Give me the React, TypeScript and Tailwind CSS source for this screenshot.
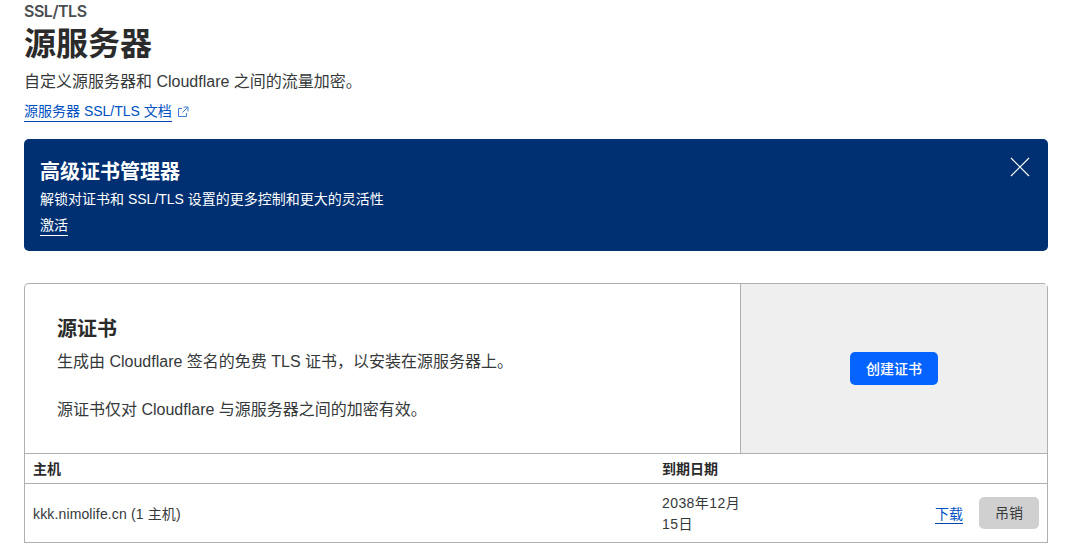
const font = "font-['Liberation_Sans','Noto_Sans_CJK_SC',sans-serif]";

export default function App() {
  return (
    <div className={`${font} h-[544px] overflow-hidden bg-white pl-6 pr-[29px] text-[#36393a]`}>
      <div className="pt-[1px] font-['Inter'] text-base font-semibold leading-[21px] tracking-[-0.03em] text-[#4a4d4f]">SSL/TLS</div>
      <h1 className="mt-[1px] text-[32px] font-semibold leading-[42px] text-[#2b2b2b]">源服务器</h1>
      <p className="mt-[5px] text-base leading-6">自定义源服务器和 Cloudflare 之间的流量加密。</p>
      <div className="mt-[8px] flex items-center gap-[5px] text-sm leading-5">
        <a className="border-b border-[#0045b0] leading-[19px] text-[#0051c3]">源服务器 SSL/TLS 文档</a>
        <svg viewBox="0 0 12 12" fill="none" stroke="#3b7dd8" strokeWidth="1" className="h-3 w-3">
          <path d="M5 2.5H1.5v8h8V7" />
          <path d="M6.5 1h4.5v4.5M11 1 5.5 6.5" />
        </svg>
      </div>

      <div className="mt-[17px] flex h-28 justify-between rounded-[5px] bg-[#003072] pl-4 pr-[18px] pt-[19px] text-white">
        <div>
          <h2 className="text-xl font-semibold leading-7">高级证书管理器</h2>
          <p className="mt-[3px] text-sm leading-5">解锁对证书和 SSL/TLS 设置的更多控制和更大的灵活性</p>
          <a className="mt-[7px] inline-block border-b border-white text-sm leading-[19px]">激活</a>
        </div>
        <svg viewBox="0 0 20 20" fill="none" stroke="white" strokeWidth="1.2" className="-mt-[1px] h-5 w-5">
          <path d="M1 1 19 19M19 1 1 19" />
        </svg>
      </div>

      <div className="mt-8 rounded-t-[5px] border border-b-0 border-[#b0b0b0]">
        <div className="flex h-[169px]">
          <div className="flex-1 pl-8 pt-[32px]">
            <h3 className="text-xl font-semibold leading-[26px] text-[#2b2b2b]">源证书</h3>
            <p className="mt-2 text-base leading-6">生成由 Cloudflare 签名的免费 TLS 证书，以安装在源服务器上。</p>
            <p className="mt-6 text-base leading-6">源证书仅对 Cloudflare 与源服务器之间的加密有效。</p>
          </div>
          <div className="flex w-[307px] items-center justify-center border-l border-[#b0b0b0] bg-[#efefef]">
            <button className="h-[33px] w-[88px] rounded-[5px] bg-[#0564ff] text-sm font-medium text-white">创建证书</button>
          </div>
        </div>
        <div className="grid h-[31px] grid-cols-[629px_1fr] items-center border-y border-[#b0b0b0] pl-2 text-sm font-semibold text-[#2b2b2b]">
          <div>主机</div>
          <div>到期日期</div>
        </div>
        <div className="grid h-[59px] grid-cols-[629px_1fr_auto] items-center border-b border-[#b0b0b0] pl-2 pr-2 text-sm">
          <div className="pt-[2px] tracking-[0.01em]">kkk.nimolife.cn (1 主机)</div>
          <div className="w-[90px] pt-[2px] leading-[21px] tracking-[0.03em]">2038年12月<br />15日</div>
          <div className="flex items-center gap-4">
            <a className="mt-[2px] border-b border-[#0045b0] leading-[18px] text-[#0051c3]">下载</a>
            <button className="h-8 w-[60px] rounded-[5px] bg-[#d0d0d0] text-sm text-[#36393a]">吊销</button>
          </div>
        </div>
      </div>
    </div>
  );
}
